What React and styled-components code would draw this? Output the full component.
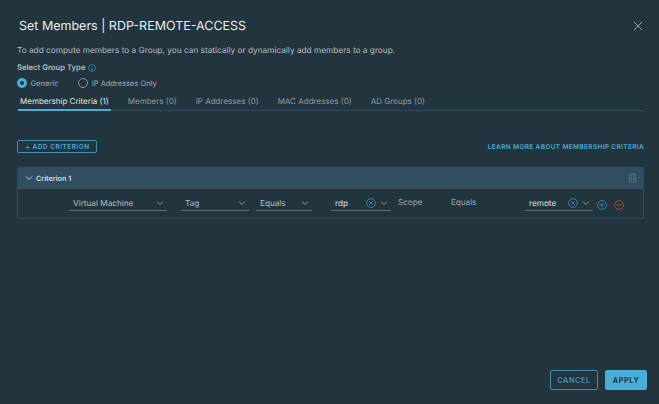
import React from "react";
import styled, { createGlobalStyle } from "styled-components";

const Global = createGlobalStyle`
  html, body { margin: 0; padding: 0; background: #22343d; }
  body { font-family: "Inter", "Liberation Sans", sans-serif; color: #b9c4c9; text-rendering: geometricPrecision; }
  * { box-sizing: border-box; }
`;
const Modal = styled.div`
  width: 659px; height: 404px; position: relative; display: flex; flex-direction: column;
  padding: 0 15px 0 17px; background: #22343d; overflow: hidden;
`;
const Header = styled.header`
  display: flex; justify-content: space-between; align-items: center; height: 20px; margin-top: 16px; padding-left: 2px;
`;
const Title = styled.h1`
  margin: 0; font-weight: 400; font-size: 12.5px; color: #e8edef;
`;
const Close = styled.button`
  background: none; border: 0; padding: 0; width: 12px; height: 12px; display: flex; color: #a9b6bc;
`;
const Desc = styled.p`
  margin: 8px 0 0; font-size: 8.27px; line-height: 12px; color: #b5c0c5;
`;
const GroupLabel = styled.div`
  margin-top: 6px; font-size: 7.7px; line-height: 12px; font-weight: 600; color: #b0bcc1; display: flex; align-items: center; gap: 3px;
`;
const RadioRow = styled.div`
  display: flex; align-items: center; margin-top: 3px; height: 12px;
`;
const RadioItem = styled.label`
  display: flex; align-items: center; gap: 3.5px; font-size: 7.5px; color: #a3afb5; margin-right: 20px;
`;
const RadioDot = styled.span`
  width: 10px; height: 10px; border-radius: 50%;
  ${p => p.$on ? "background:#49afd9; display:flex; align-items:center; justify-content:center;" : "border:1px solid #8a979d;"}
  &::after { content: ""; display: ${p => p.$on ? "block" : "none"}; width: 4px; height: 4px; border-radius: 50%; background: #22343d; }
`;
const Tabs = styled.nav`
  display: flex; margin-top: 5px; height: 17px; border-bottom: 1px solid #32495a; gap: 15px; padding-left: 1px;
`;
const Tab = styled.div`
  font-size: 8.02px; line-height: 14px; padding: 0 2px; height: 17px; color: ${p => p.$active ? "#e1e6e9" : "#8f9ca2"};
  border-bottom: ${p => p.$active ? "2px solid #49afd9" : "none"};
`;
const Actions = styled.div`
  display: flex; justify-content: space-between; align-items: center; margin-top: 29px;
`;
const OutlineSmall = styled.button`
  height: 13px; width: 80px; border: 1px solid #3e8eb0; border-radius: 2px; background: none; color: #49afd9;
  font: 600 6.4px "Inter", sans-serif; letter-spacing: 0.55px; padding: 0 0 0 1px; text-transform: uppercase;
`;
const LearnLink = styled.a`
  font-size: 6.5px; font-weight: 600; letter-spacing: 0.35px; color: #49afd9; text-transform: uppercase;
`;
const Card = styled.section`
  margin-top: 14px; border: 1px solid #34495a; border-radius: 2px; height: 52px; display: flex; flex-direction: column;
`;
const CardHead = styled.div`
  height: 21px; background: #324c60; display: flex; align-items: center; padding: 0 6px 0 7px; justify-content: space-between;
  border-bottom: 1px solid #3a4f5c;
`;
const CardName = styled.div`
  display: flex; align-items: center; gap: 3px; font-size: 7.2px; font-weight: 600; color: #d7dfe3;
`;
const Row = styled.div`
  display: flex; align-items: flex-start; padding: 6px 0 0 51px;
`;
const Field = styled.div`
  width: ${p => p.$w}px; margin-right: ${p => p.$mr}px; height: 16px; border-bottom: 1.5px solid #5d6d75; display: flex; align-items: center;
  padding: 0 3px 0 4px; font-size: 8.2px; color: ${p => p.$light ? "#dfe5e8" : "#b4bfc4"}; justify-content: space-between;
`;
const Plain = styled.div`
  width: ${p => p.$w}px; font-size: 8.1px; line-height: 14px; color: #9eabb1;
`;
const IconWrap = styled.span`
  display: flex; align-items: center; gap: 4px;
`;
const RoundIcons = styled.div`
  display: flex; gap: 7px; margin-top: 5px; margin-left: 4px;
`;
const Footer = styled.footer`
  margin-top: auto; margin-bottom: 14px; margin-right: -3px; display: flex; justify-content: flex-end; gap: 7px;
`;
const Btn = styled.button`
  height: 20px; width: ${p => p.$w}px; border-radius: 2px; font: 600 7.3px "Inter", sans-serif; letter-spacing: 0.55px; padding: 0;
  border: 1px solid ${p => p.$primary ? "#49afd9" : "#3e8eb0"}; background: ${p => p.$primary ? "#49afd9" : "transparent"};
  color: ${p => p.$primary ? "#17272f" : "#4596b8"};
`;

const Chevron = ({ s = 8, c = "#9aa7ad" }) => (
  <svg width={s} height={s} viewBox="0 0 8 8" fill="none"><path d="M1 2.5 4 5.5 7 2.5" stroke={c} strokeWidth="0.9" /></svg>
);
const ClearIcon = () => (
  <svg width="10" height="10" viewBox="0 0 10 10" fill="none" stroke="#3f94bb" strokeWidth="0.8">
    <circle cx="5" cy="5" r="4.4" /><path d="M3.4 3.4 6.6 6.6M6.6 3.4 3.4 6.6" />
  </svg>
);
const PlusCircle = () => (
  <svg width="10" height="10" viewBox="0 0 10 10" fill="none" stroke="#3f94bb" strokeWidth="0.8">
    <circle cx="5" cy="5" r="4.4" /><path d="M5 2.6V7.4M2.6 5H7.4" />
  </svg>
);
const MinusCircle = () => (
  <svg width="10" height="10" viewBox="0 0 10 10" fill="none" stroke="#b8504b" strokeWidth="0.8">
    <circle cx="5" cy="5" r="4.4" /><path d="M2.6 5H7.4" />
  </svg>
);
const Trash = () => (
  <svg width="9" height="10" viewBox="0 0 9 10" fill="none" stroke="#3f7f9f" strokeWidth="0.8">
    <path d="M0.8 2H8.2M3 2V.7H6V2M1.5 2V9.4H7.5V2M3.4 3.5V8M5.6 3.5V8" />
  </svg>
);
const Info = () => (
  <svg width="8" height="8" viewBox="0 0 8 8" fill="none" stroke="#3f94bb" strokeWidth="0.7">
    <circle cx="4" cy="4" r="3.5" /><path d="M4 3.4V6.2M3.4 6.2H4.6M4 2V2.6" />
  </svg>
);

export default function App() {
  return (
    <>
      <Global />
      <Modal>
        <Header>
          <Title>Set Members | RDP-REMOTE-ACCESS</Title>
          <Close aria-label="Close">
            <svg width="12" height="12" viewBox="0 0 12 12" fill="none" stroke="currentColor" strokeWidth="0.9"><path d="M2 2 10 10M10 2 2 10" /></svg>
          </Close>
        </Header>
        <Desc>To add compute members to a Group, you can statically or dynamically add members to a group.</Desc>
        <GroupLabel>Select Group Type <Info /></GroupLabel>
        <RadioRow>
          <RadioItem><RadioDot $on />Generic</RadioItem>
          <RadioItem><RadioDot />IP Addresses Only</RadioItem>
        </RadioRow>
        <Tabs>
          <Tab $active>Membership Criteria (1)</Tab>
          <Tab>Members (0)</Tab>
          <Tab>IP Addresses (0)</Tab>
          <Tab>MAC Addresses (0)</Tab>
          <Tab>AD Groups (0)</Tab>
        </Tabs>
        <Actions>
          <OutlineSmall>+ Add Criterion</OutlineSmall>
          <LearnLink>Learn more about membership criteria</LearnLink>
        </Actions>
        <Card>
          <CardHead>
            <CardName><Chevron c="#d7dfe3" />Criterion 1</CardName>
            <Trash />
          </CardHead>
          <Row>
            <Field $w={98} $mr={14}>Virtual Machine<Chevron /></Field>
            <Field $w={68} $mr={7}>Tag<Chevron /></Field>
            <Field $w={56} $mr={19}>Equals<Chevron /></Field>
            <Field $w={60} $mr={7} $light>rdp<IconWrap><ClearIcon /><Chevron /></IconWrap></Field>
            <Plain $w={53}>Scope</Plain>
            <Plain $w={74}>Equals</Plain>
            <Field $w={68} $mr={0} $light>remote<IconWrap><ClearIcon /><Chevron /></IconWrap></Field>
            <RoundIcons><PlusCircle /><MinusCircle /></RoundIcons>
          </Row>
        </Card>
        <Footer>
          <Btn $w={48}>CANCEL</Btn>
          <Btn $w={42} $primary>APPLY</Btn>
        </Footer>
      </Modal>
    </>
  );
}
